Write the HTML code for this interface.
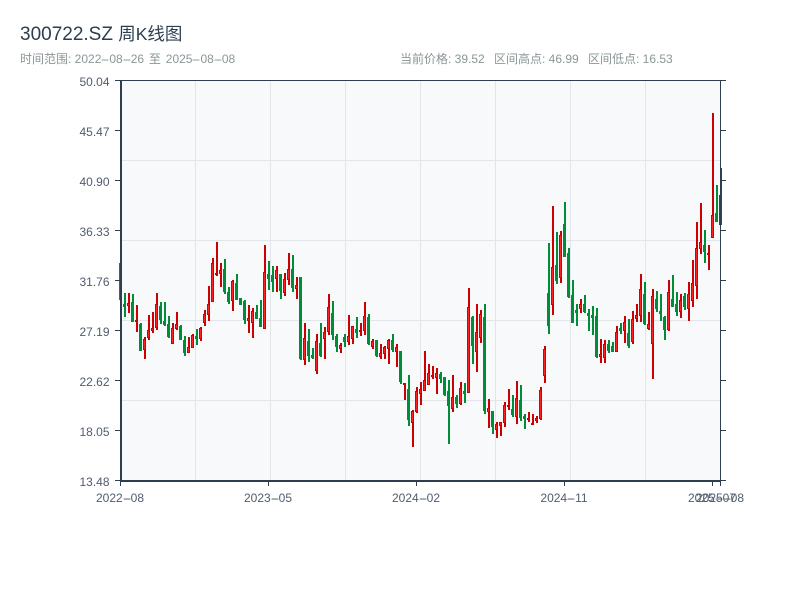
<!DOCTYPE html>
<html lang="zh">
<head>
<meta charset="utf-8">
<title>300722.SZ 周K线图</title>
<style>
html,body{margin:0;padding:0;background:#fff;width:800px;height:600px;overflow:hidden;position:relative}
svg{display:block;position:absolute;left:0;top:0}
div.t{position:absolute;white-space:nowrap;font-family:"Liberation Sans","Noto Sans CJK SC",sans-serif;font-size:12px;line-height:16px;height:16px}
.g{color:#8a9697}
.a{color:#505c6e}
.y{left:49.5px;width:60px;text-align:right}
.x{width:100px;text-align:center}
.d{display:inline-block;width:8px;text-align:center;transform:scaleX(2.3)}
</style>
</head>
<body>
<svg width="800" height="600" viewBox="0 0 800 600" xmlns="http://www.w3.org/2000/svg">
<rect width="800" height="600" fill="#fff"/>
<rect x="120" y="80" width="600" height="400" fill="#f8f9fa"/>
<path fill="none" stroke="#e2e5ea" stroke-width="1" d="M120 160.5H720M120 240.5H720M120 320.5H720M120 400.5H720M195.5 80V480M270.5 80V480M345.5 80V480M420.5 80V480M495.5 80V480M570.5 80V480M645.5 80V480"/>
<path fill="none" stroke="#008c38" stroke-width="2" d="M121 263V300M125 293V317M133 294V322M141 323V351M161 302V324M165 302V326M169 316V338M181 325V340M185 336V356M197 329V345M225 259V294M229 287V304M237 274V300M241 298V305M245 300V324M257 305V319M261 300V327M269 261V290M273 266V292M281 274V299M293 255V292M301 277V360M309 329V362M313 348V359M321 323V357M333 301V340M337 334V352M345 334V347M357 317V338M369 314V345M377 340V357M393 334V352M401 351V384M409 375V426M441 372V383M445 377V396M449 380V444M457 395V408M465 383V403M473 316V364M485 304V414M493 411V434M513 395V417M521 385V421M525 414V429M549 243V334M557 232V284M565 202V257M569 248V298M573 280V323M577 304V326M585 295V313M589 309V331M593 306V335M597 308V358M609 340V353M613 342V352M621 323V334M629 319V348M645 282V325M657 291V312M661 294V321M665 316V340M673 275V307M677 292V316M685 293V310M705 230V263M717 185V222"/>
<path fill="none" stroke="#008c38" stroke-width="3" d="M120.5 263V300M124.5 304V307M132.5 302V322M140.5 324V351M160.5 306V320M164.5 321V325M168.5 324V337M180.5 326V340M184.5 340V353M196.5 336V339M224.5 269V292M228.5 292V302M236.5 283V300M240.5 298V305M244.5 301V320M256.5 312V319M260.5 318V327M268.5 274V279M272.5 275V282M280.5 274V291M292.5 269V288M300.5 277V359M308.5 341V356M312.5 355V358M320.5 343V356M332.5 313V335M336.5 336V347M344.5 337V342M356.5 329V333M368.5 317V344M376.5 340V356M392.5 340V350M400.5 351V382M408.5 389V420M440.5 374V379M444.5 377V395M448.5 391V406M456.5 397V404M464.5 391V394M472.5 317V346M484.5 317V411M492.5 411V427M512.5 409V415M520.5 400V418M524.5 416V419M548.5 293V326M556.5 265V281M564.5 224V257M568.5 253V297M572.5 295V323M576.5 310V313M584.5 304V312M588.5 313V316M592.5 315V318M596.5 316V357M608.5 344V351M612.5 346V352M620.5 328V331M628.5 333V346M644.5 294V324M656.5 299V309M660.5 311V314M664.5 317V330M672.5 299V307M676.5 304V312M684.5 296V307M704.5 245V252M716.5 213V222"/>
<path fill="none" stroke="#cc0000" stroke-width="2" d="M129 293V313M137 305V332M145 337V359M149 315V340M153 312V333M157 293V330M173 323V344M177 312V330M189 337V353M193 334V348M201 327V341M205 310V326M209 286V321M213 258V302M217 242V276M221 263V287M233 280V311M249 305V333M253 308V338M265 245V329M277 266V292M285 273V296M289 253V285M297 277V299M305 323V365M317 334V374M325 327V359M329 294V335M341 343V353M349 315V345M353 326V344M361 323V336M365 302V335M373 339V349M381 344V359M385 346V359M389 339V364M397 344V367M405 383V400M413 410V447M417 387V413M421 382V405M425 351V391M429 364V385M433 366V379M437 368V394M453 375V412M461 382V405M469 288V393M477 304V372M481 310V343M489 399V428M497 422V438M501 422V436M505 402V427M509 389V410M517 381V424M529 412V422M533 414V425M537 416V423M541 387V420M545 346V383M553 206V315M561 231V283M581 299V313M601 339V363M605 340V363M617 326V352M625 316V343M633 311V344M637 304V322M641 274V322M649 312V330M653 289V379M669 280V331M681 294V318M689 282V321M693 260V307M697 222V299M701 203V254M709 245V270M713 113V238M721 168V225"/>
<path fill="none" stroke="#cc0000" stroke-width="3" d="M128.5 303V306M136.5 320V322M144.5 339V350M148.5 330V338M152.5 328V331M156.5 304V328M172.5 328V344M176.5 324V329M188.5 347V353M192.5 335V348M200.5 328V339M204.5 314V323M208.5 304V315M212.5 263V302M216.5 273V275M220.5 270V274M232.5 281V301M248.5 318V321M252.5 311V323M264.5 272V329M276.5 270V279M284.5 279V293M288.5 269V280M296.5 285V289M304.5 338V360M316.5 341V371M324.5 332V339M328.5 307V332M340.5 345V349M348.5 336V342M352.5 326V339M360.5 330V332M364.5 316V331M372.5 341V347M380.5 353V357M384.5 347V354M388.5 340V349M396.5 347V352M404.5 383V385M412.5 411V423M416.5 391V412M420.5 389V394M424.5 380V391M428.5 373V385M432.5 375V377M436.5 373V378M452.5 397V409M460.5 388V404M468.5 307V393M476.5 332V352M480.5 314V338M488.5 408V412M496.5 424V430M500.5 422V426M504.5 405V423M508.5 405V407M516.5 398V417M528.5 418V420M532.5 423V425M536.5 418V421M540.5 390V419M544.5 349V376M552.5 267V305M560.5 235V278M580.5 304V309M600.5 354V357M604.5 344V358M616.5 332V352M624.5 322V331M632.5 319V342M636.5 315V319M640.5 289V316M648.5 324V329M652.5 296V344M668.5 292V330M680.5 300V312M688.5 294V309M692.5 283V301M696.5 248V286M700.5 242V249M708.5 253V255M712.5 215V238M720.5 195V225"/>
<path fill="none" stroke="#ff2020" stroke-width="1.2" d="M128.5 304V305M144.5 340V349M148.5 331V337M152.5 329V330M156.5 305V327M172.5 329V343M176.5 325V328M188.5 348V352M192.5 336V347M200.5 329V338M204.5 315V322M208.5 305V314M212.5 264V301M220.5 271V273M232.5 282V300M248.5 319V320M252.5 312V322M264.5 273V328M276.5 271V278M284.5 280V292M288.5 270V279M296.5 286V288M304.5 339V359M316.5 342V370M324.5 333V338M328.5 308V331M340.5 346V348M348.5 337V341M352.5 327V338M364.5 317V330M372.5 342V346M380.5 354V356M384.5 348V353M388.5 341V348M396.5 348V351M412.5 412V422M416.5 392V411M420.5 390V393M424.5 381V390M428.5 374V384M436.5 374V377M452.5 398V408M460.5 389V403M468.5 308V392M476.5 333V351M480.5 315V337M488.5 409V411M496.5 425V429M500.5 423V425M504.5 406V422M516.5 399V416M536.5 419V420M540.5 391V418M544.5 350V375M552.5 268V304M560.5 236V277M580.5 305V308M600.5 355V356M604.5 345V357M616.5 333V351M624.5 323V330M632.5 320V341M636.5 316V318M640.5 290V315M648.5 325V328M652.5 297V343M668.5 293V329M680.5 301V311M688.5 295V308M692.5 284V300M696.5 249V285M700.5 243V248M712.5 216V237M720.5 196V224"/>
<g fill="#2c3e50">
<rect x="120" y="80" width="600" height="1"/>
<rect x="120" y="80" width="2" height="401"/>
<rect x="720" y="80" width="1" height="401"/>
<rect x="120" y="480" width="601" height="2"/>
</g>
<path fill="none" stroke="#2c3e50" stroke-width="1" d="M115 80.5H120M115 130.5H120M115 180.5H120M115 230.5H120M115 280.5H120M115 330.5H120M115 380.5H120M115 430.5H120M115 480.5H120M721 80.5H726M721 130.5H726M721 180.5H726M721 230.5H726M721 280.5H726M721 330.5H726M721 380.5H726M721 430.5H726M721 480.5H726M120.5 481V486M268.5 481V486M416.5 481V486M564.5 481V486M712.5 481V486M720.5 481V486"/>
</svg>
<div class="t" style="left:20px;top:22px;font-size:19px;line-height:24px;height:24px;color:#2c3e50">300722.SZ <span style="font-size:17.5px">周K线图</span></div>
<div class="t g" style="left:20px;top:51px">时间范围: 2022<span class="d">-</span>08<span class="d">-</span>26 <span style="margin:0 1.5px">至</span> 2025<span class="d">-</span>08<span class="d">-</span>08</div>
<div class="t g" style="left:400px;top:51px">当前价格: 39.52</div>
<div class="t g" style="left:494px;top:51px">区间高点: 46.99</div>
<div class="t g" style="left:588px;top:51px">区间低点: 16.53</div>
<div class="t a y" style="top:74px">50.04</div>
<div class="t a y" style="top:124px">45.47</div>
<div class="t a y" style="top:174px">40.90</div>
<div class="t a y" style="top:224px">36.33</div>
<div class="t a y" style="top:274px">31.76</div>
<div class="t a y" style="top:324px">27.19</div>
<div class="t a y" style="top:374px">22.62</div>
<div class="t a y" style="top:424px">18.05</div>
<div class="t a y" style="top:474px">13.48</div>
<div class="t a x" style="left:70px;top:490px">2022<span class="d">-</span>08</div>
<div class="t a x" style="left:218px;top:490px">2023<span class="d">-</span>05</div>
<div class="t a x" style="left:366px;top:490px">2024<span class="d">-</span>02</div>
<div class="t a x" style="left:514px;top:490px">2024<span class="d">-</span>11</div>
<div class="t a x" style="left:662px;top:490px">2025<span class="d">-</span>07</div>
<div class="t a x" style="left:670px;top:490px">2025<span class="d">-</span>08</div>
</body>
</html>
